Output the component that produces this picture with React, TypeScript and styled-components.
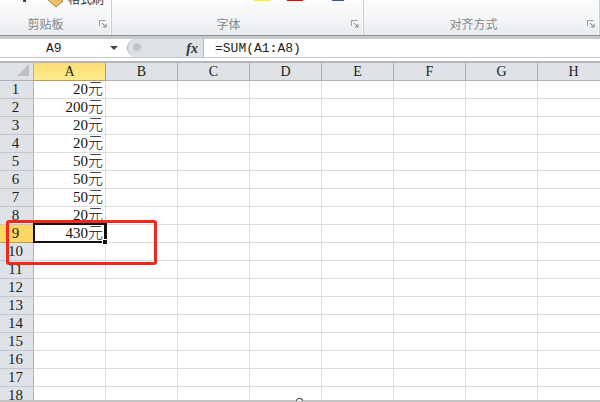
import React from "react";
import styled, { createGlobalStyle } from "styled-components";

const Global = createGlobalStyle`
  html, body { margin: 0; padding: 0; background: #fff; }
  body { width: 600px; height: 402px; overflow: hidden; font-family: "Liberation Serif", "Noto Sans CJK SC", serif; }
`;
const Page = styled.div`position: relative; width: 600px; height: 402px; overflow: hidden; display: flex; flex-direction: column; background: #fff;`;
const Ribbon = styled.div`display: flex; height: 36px; flex: none; box-sizing: border-box; background: linear-gradient(#fbfcfd, #f5f6f8 50%, #e8ebef); border-bottom: 1px solid #8f949a;`;
const Group = styled.div<{ $w: number; $shift: number }>`
  position: relative; width: ${p => p.$w}px; flex: none; box-sizing: border-box; border-right: 1px solid #c8ccd2;
  box-shadow: inset -1px 0 0 #fff; display: flex; align-items: flex-end; justify-content: center; padding-bottom: 3px; padding-right: ${p => p.$shift}px;
`;
const GroupLabel = styled.span`font: 12px "Noto Sans CJK SC", sans-serif; line-height: 17px; color: #80878f;`;
const Launcher = styled.svg`position: absolute; right: 4px; bottom: 7px; width: 8px; height: 8px;`;
const Bar = styled.div`height: 27px; flex: none; background: #fff; box-sizing: border-box; border-top: 3px solid #c6c9ce; border-bottom: 2px solid #b4b8be; padding-bottom: 2px;`;
const BarInner = styled.div`height: 19px; display: flex; border-bottom: 1px solid #c4c8cd; box-sizing: border-box;`;
const NameBox = styled.div`width: 127px; flex: none; display: flex; align-items: center; font: 13px "Liberation Mono", monospace; color: #222; position: relative; padding-left: 46px; box-sizing: border-box;`;
const Drop = styled.span`position: absolute; right: 9px; top: 7px; border: 4px solid transparent; border-top: 4px solid #444; border-bottom: 0;`;
const FxPanel = styled.div`width: 76px; flex: none; background: #dfe2e7; display: flex; align-items: center; justify-content: flex-end; padding-right: 5px; box-sizing: border-box; position: relative; border-radius: 10px 0 0 10px; border-left: 1px solid #b0b4ba;`;
const Knob = styled.span`position: absolute; left: 4px; top: 4px; width: 10px; height: 10px; border-radius: 50%; background: radial-gradient(circle at 50% 40%, #bfc3c8 35%, #eef0f2 90%);`;
const Fx = styled.i`font: italic bold 14px "Liberation Serif", serif; color: #333; line-height: 15px;`;
const Formula = styled.div`flex: 1; padding-left: 11px; display: flex; align-items: center; font: 13px "Liberation Mono", monospace; color: #222; border-left: 1px solid #b4b8be;`;
const Row = styled.div<{ $h: number }>`display: grid; grid-template-columns: 34px repeat(8, 72px); height: ${p => p.$h}px; flex: none;`;
const Corner = styled.div`background: #dfe2e7; border-right: 1px solid #aeb2b8; border-bottom: 1px solid #aeb2b8; box-sizing: border-box; position: relative;`;
const Tri = styled.span`position: absolute; right: 4px; bottom: 4px; border-style: solid; border-width: 0 0 12px 12px; border-color: transparent transparent #bcc0c5 transparent;`;
const ColHead = styled.div<{ $on?: boolean }>`
  box-sizing: border-box; display: flex; align-items: center; justify-content: center; font-size: 14px; color: #222;
  background: ${p => p.$on ? "linear-gradient(#fbdc7c, #fde77f 60%, #fdea8e)" : "#dfe2e7"};
  border-right: 1px solid ${p => p.$on ? "#c29a4a" : "#aeb2b8"};
  border-bottom: 1px solid ${p => p.$on ? "#c29a4a" : "#aeb2b8"};
`;
const RowHead = styled.div<{ $on?: boolean }>`
  box-sizing: border-box; display: flex; align-items: center; justify-content: center; font-size: 15px; color: #222; padding-right: 2px;
  background: ${p => p.$on ? "#fcd766" : "#dfe2e7"};
  border-right: 1px solid ${p => p.$on ? "#c29a4a" : "#aeb2b8"};
  border-bottom: 1px solid ${p => p.$on ? "#c29a4a" : "#c3c6cb"};
`;
const Cell = styled.div`
  box-sizing: border-box; border-right: 1px solid #dadcdf; border-bottom: 1px solid #dadcdf;
  display: flex; align-items: center; justify-content: flex-end; padding: 0 2px 0 0; font-size: 15px; font-weight: 300; color: #111; white-space: nowrap; line-height: 15px;
`;
const Selected = styled(Cell)`
  position: relative;
  &::before { content: ""; position: absolute; left: -1px; right: -2px; top: -2px; bottom: -1px; border: 2px solid #111; border-right-width: 3px; }
  &::after { content: ""; position: absolute; right: -3px; bottom: -3px; width: 4px; height: 4px; background: #111; border: 1px solid #fff; box-sizing: content-box; }
`;
const Mark = styled.div`position: absolute; left: 6px; top: 220px; width: 151px; height: 45px; border: 3px solid #f5261c; border-radius: 3px; box-sizing: border-box; pointer-events: none;`;
const Foot = styled.div`position: absolute; left: 0; right: 0; bottom: 0; height: 2px; background: #c3c3c3;`;
const Dot = styled.span`position: absolute; left: 296px; bottom: 1px; width: 7px; height: 3px; border-radius: 4px 4px 0 0; border: 1px solid #555; border-bottom: 0; box-sizing: border-box; background: #fff;`;
const Chip = styled.span<{ $c: string; $l: number; $w: number }>`position: absolute; top: 0; height: 1px; left: ${p => p.$l}px; width: ${p => p.$w}px; background: ${p => p.$c};`;
const Tick = styled.span`position: absolute; left: 23px; top: 0; width: 3px; height: 2px; background: #444;`;
const BrushIcon = styled.svg`position: absolute; left: 47px; top: -8px;`;
const BrushLabel = styled.span`position: absolute; left: 68px; top: -8px; font: 12px/13px "Noto Sans CJK SC", sans-serif; color: #333;`;

const values: Record<number, string> = { 1: "20元", 2: "200元", 3: "20元", 4: "20元", 5: "50元", 6: "50元", 7: "50元", 8: "20元" };
const cols = ["A", "B", "C", "D", "E", "F", "G", "H"];
const rows = Array.from({ length: 18 }, (_, i) => i + 1);

const LauncherIcon = () => (
  <Launcher viewBox="0 0 8 8"><path d="M0.5 6V0.5H6.5" fill="none" stroke="#9aa0a8" /><path d="M3 3l4 4M7 4v3H4" fill="none" stroke="#7f858d" /></Launcher>
);

export default function App() {
  return (
    <Page>
      <Global />
      <Ribbon>
        <Group $w={112} $shift={20}>
          <Tick />
          <BrushIcon width="18" height="16" viewBox="0 0 18 16"><path d="M1 8l7-6 8 7-7 6z" fill="#e9c46a" stroke="#a98432" /></BrushIcon>
          <BrushLabel>格式刷</BrushLabel>
          <GroupLabel>剪贴板</GroupLabel><LauncherIcon />
        </Group>
        <Group $w={252} $shift={18}>
          <Chip $c="#fff200" $l={142} $w={16} />
          <Chip $c="#f00000" $l={175} $w={16} />
          <Chip $c="#3a5aa8" $l={220} $w={12} />
          <GroupLabel>字体</GroupLabel><LauncherIcon />
        </Group>
        <Group $w={236} $shift={16}><GroupLabel>对齐方式</GroupLabel><LauncherIcon /></Group>
      </Ribbon>
      <Bar>
        <BarInner>
          <NameBox>A9<Drop /></NameBox>
          <FxPanel><Knob /><Fx>fx</Fx></FxPanel>
          <Formula>=SUM(A1:A8)</Formula>
        </BarInner>
      </Bar>
      <Row $h={18}>
        <Corner><Tri /></Corner>
        {cols.map((c, i) => <ColHead key={c} $on={i === 0}>{c}</ColHead>)}
      </Row>
      {rows.map(r => (
        <Row $h={18} key={r}>
          <RowHead $on={r === 9}>{r}</RowHead>
          {cols.map((c, i) => r === 9 && i === 0
            ? <Selected key={c}>430元</Selected>
            : <Cell key={c}>{i === 0 ? values[r] : ""}</Cell>)}
        </Row>
      ))}
      <Mark />
      <Foot /><Dot />
    </Page>
  );
}
